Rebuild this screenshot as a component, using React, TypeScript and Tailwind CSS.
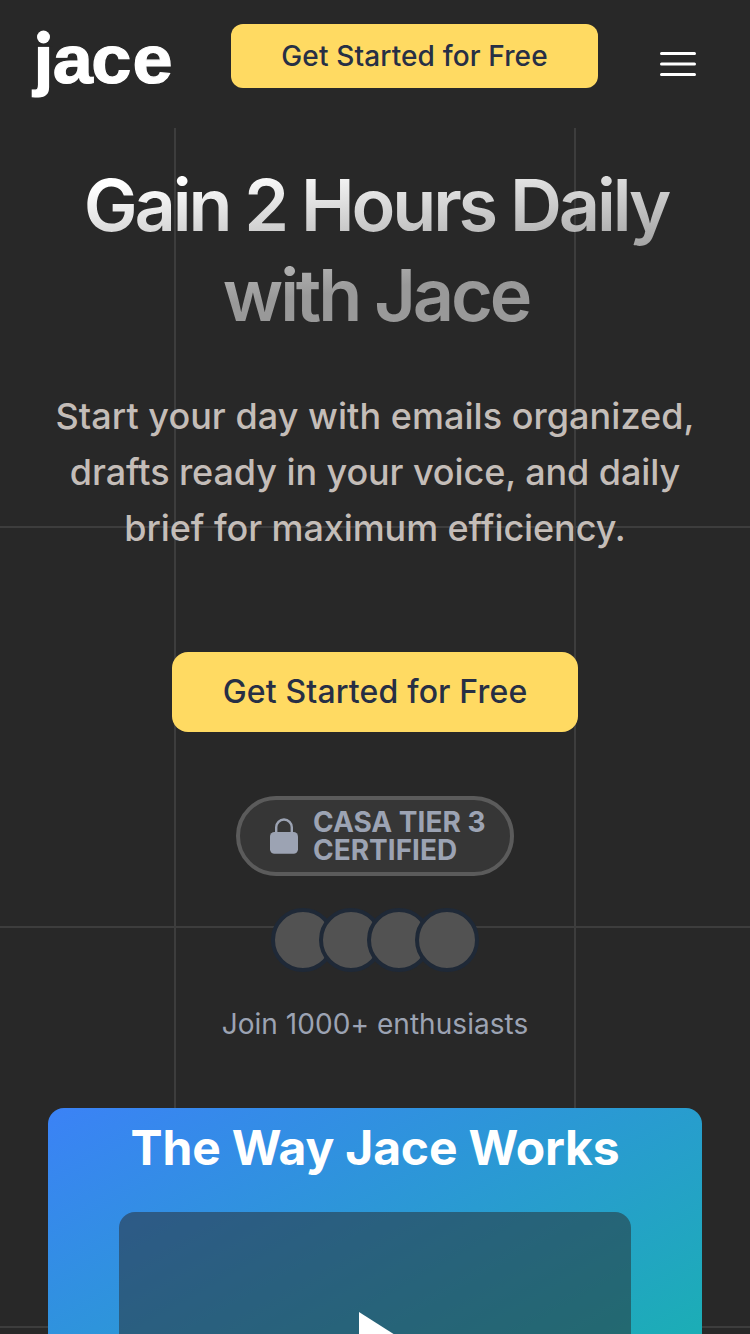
const avatars = [0, 1, 2, 3];

function Logo() {
  return (
    <svg className="h-32 w-[231px] shrink-0 text-white" viewBox="0 0 231 128">
      <g transform="translate(33.6 83) scale(1.03 0.99)">
        <text
          x="0 18.6 56 96"
          y="0"
          fill="currentColor"
          stroke="currentColor"
          strokeWidth="1.2"
          fontFamily="'Liberation Sans', Arial, sans-serif"
          fontSize="70"
          fontWeight="700"
        >
          jace
        </text>
      </g>
      <rect x="34" y="26" width="19" height="20.8" fill="#282828" />
      <circle cx="43.5" cy="37" r="6.5" fill="currentColor" />
    </svg>
  );
}

function Header() {
  return (
    <header className="flex h-32 shrink-0 items-start bg-[#282828]">
      <Logo />
      <button className="mt-6 h-16 w-[367px] rounded-xl bg-[#ffda62] text-[28px] font-medium tracking-[0.13px] text-[#272f45]">
        Get Started for Free
      </button>
      <svg className="ml-14 mt-10 size-12" viewBox="0 0 24 24" fill="none" stroke="#fff" strokeWidth="1.5" strokeLinecap="round">
        <path d="M3.75 6.75h16.5M3.75 12h16.5M3.75 17.25h16.5" />
      </svg>
    </header>
  );
}

function CertifiedBadge() {
  return (
    <div className="mt-16 flex h-20 w-[278px] items-center rounded-full border-4 border-[#5b5b5b] bg-[#363636] pl-[30px] text-[#9ca3b3]">
      <svg className="h-9 w-7 shrink-0" viewBox="0 0 28 36" fill="none">
        <path d="M6.2 16V9.3a7.8 7.8 0 0 1 15.6 0V16" stroke="currentColor" strokeWidth="2.4" />
        <rect x="0" y="14" width="28" height="21.7" rx="4.5" fill="currentColor" />
      </svg>
      <div className="ml-[15px] whitespace-nowrap text-[28px] font-bold leading-7">
        CASA TIER 3
        <br />
        CERTIFIED
      </div>
    </div>
  );
}

function VideoCard() {
  return (
    <div className="mt-16 flex h-[368px] w-[654px] shrink-0 flex-col items-center rounded-2xl bg-[linear-gradient(to_bottom_right,#3b82f6,#14b8a6)] pt-2">
      <h2 className="text-[48px] font-bold leading-[64px] tracking-[-0.004em] text-white">The Way Jace Works</h2>
      <div className="mt-8 flex h-64 w-[512px] items-center justify-center rounded-2xl bg-[#282828]/50">
        <svg className="size-24" viewBox="0 0 24 24" fill="#fff">
          <path d="M8 5v14l11-7z" />
        </svg>
      </div>
    </div>
  );
}

export default function App() {
  return (
    <div className="flex h-[1334px] w-[750px] flex-col overflow-hidden bg-[#282828] bg-[linear-gradient(to_right,#3d3d3d_2px,transparent_2px),linear-gradient(to_bottom,#3d3d3d_2px,transparent_2px)] bg-[length:400px_400px] bg-[position:174px_126px] font-['Inter',sans-serif]">
      <Header />
      <main className="flex flex-col items-center">
        <h1 className="mt-8 w-[654px] bg-[linear-gradient(174deg,#fff_32px,#999_162px)] bg-clip-text pl-0.5 text-center text-[72px] font-semibold leading-[90px] tracking-[-3.15px] text-transparent">
          Gain 2 Hours Daily
          <br />
          with Jace
        </h1>
        <p className="mt-12 whitespace-nowrap text-center text-[36px] font-medium leading-[56px] tracking-[-0.09px] text-[#c4bdb8]">
          <span className="tracking-[0.04px]">Start your day with emails organized,</span>
          <br />
          drafts ready in your voice, and daily
          <br />
          brief for maximum efficiency.
        </p>
        <button className="mt-24 h-20 w-[406px] rounded-2xl bg-[#ffda62] text-[32px] font-medium tracking-[0.16px] text-[#272f45]">
          Get Started for Free
        </button>
        <CertifiedBadge />
        <div className="mt-8 flex -space-x-4">
          {avatars.map((a) => (
            <div key={a} className="size-16 rounded-full border-4 border-[#1f2937] bg-[#525252]" />
          ))}
        </div>
        <p className="mt-8 text-[28px] leading-10 tracking-[0.05px] text-[#9ca3b3]">Join 1000+ enthusiasts</p>
        <VideoCard />
      </main>
    </div>
  );
}
